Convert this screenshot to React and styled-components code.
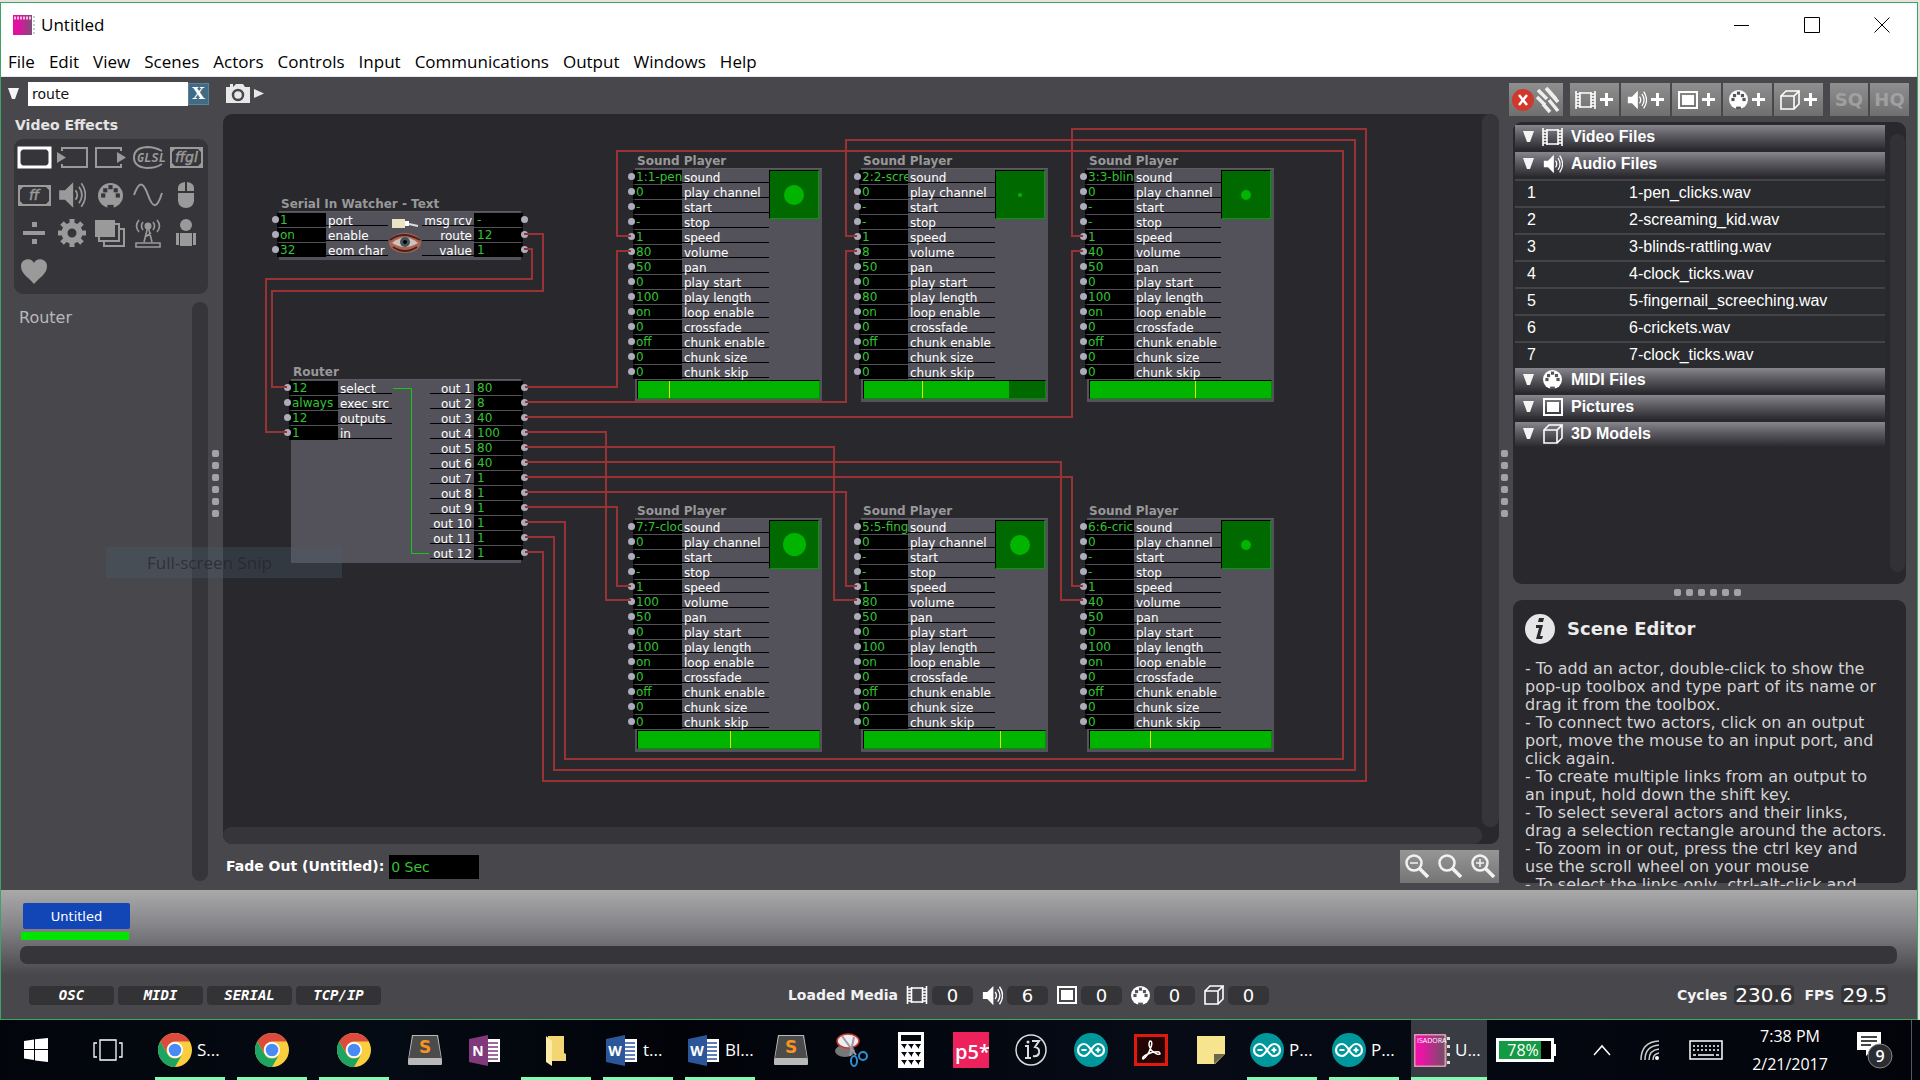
import React from "react";
import styled, { createGlobalStyle } from "styled-components";

const UI = `"DejaVu Sans", Verdana, sans-serif`;
const SYS = `"Open Sans", "Segoe UI", sans-serif`;
const ARIAL = `"Liberation Sans", Arial, sans-serif`;

const Global = createGlobalStyle`
  * { box-sizing: border-box; }
  html, body { margin: 0; padding: 0; background: #e6e3dc; }
  body { font-family: ${UI}; color: #fff; }
  button, input { font: inherit; color: inherit; border: 0; padding: 0; margin: 0; background: none; border-radius: 0; }
  h1, h2, h3, p, ul { margin: 0; padding: 0; font-weight: normal; }
  ul { list-style: none; }
  svg { display: block; flex: none; }
`;

const Screen = styled.div`
  display: flex;
  flex-direction: column;
  min-height: 100vh;
  padding-top: 2px;
`;
const Frame = styled.div`
  flex: 1;
  display: flex;
  flex-direction: column;
  margin-right: 2px;
  border: 1px solid #3ba467;
  background: #48474c;
`;

/* Title and menu */
const TitleBar = styled.header`
  display: flex;
  align-items: center;
  height: 44px;
  padding-left: 12px;
  background: #fff;
  color: #000;
`;
const Title = styled.h1`
  flex: 1;
  margin-left: 6px;
  font: 17px/24px ${SYS};
`;
const WinButton = styled.button`
  display: flex;
  align-items: center;
  justify-content: center;
  width: 70px;
  height: 40px;
`;
const MenuBar = styled.nav`
  display: flex;
  height: 30px;
  padding-left: 7px;
  gap: 14px;
  background: #fff;
  border-bottom: 1px solid #e8e8f0;
`;
const MenuItem = styled.button`
  font: 17px/30px ${SYS};
  color: #000;
`;

/* Main area */
const Body = styled.div`
  flex: 1;
  display: flex;
  min-height: 0;
`;
const Sidebar = styled.aside`
  display: flex;
  flex-direction: column;
  width: 207px;
  padding-bottom: 9px;
`;
const SearchRow = styled.div`
  display: flex;
  align-items: center;
  height: 36px;
  padding: 0 0 3px 7px;
`;
const SearchInput = styled.input`
  width: 160px;
  height: 24px;
  margin-left: 9px;
  padding: 0 4px;
  background: #fff;
  color: #111;
  font-size: 14px;
`;
const ClearButton = styled.button`
  flex: none;
  width: 21px;
  height: 22px;
  background: #406b87;
  border: 1px solid #5c8299;
  font: bold 16px/20px "DejaVu Serif", serif;
`;
const PaletteTitle = styled.h2`
  padding-left: 14px;
  height: 26px;
  font: bold 14px/24px ${UI};
  color: #e4e4e4;
`;
const Palette = styled.div`
  display: grid;
  grid-template-columns: repeat(5, 38px);
  grid-auto-rows: 38px;
  height: 155px;
  margin-left: 13px;
  padding-left: 2px;
  border-radius: 9px;
  background: #363539;
`;
const PaletteButton = styled.button`
  display: flex;
  align-items: center;
  justify-content: center;
  padding: 0 2px 2px 0;
  color: ${(p) => (p.$on ? "#fff" : "#9a9a9a")};
`;
const ActorList = styled.div`
  flex: 1;
  display: flex;
  justify-content: space-between;
  margin-top: 8px;
  padding-left: 18px;
`;
const ActorItem = styled.button`
  align-self: flex-start;
  padding-top: 6px;
  font-size: 16px;
  line-height: 20px;
  color: #b9b9bb;
`;
const ScrollTrack = styled.div`
  width: 16px;
  border-radius: 8px;
  background: #363539;
`;
const Splitter = styled.div`
  display: flex;
  flex-direction: ${(p) => (p.$row ? "row" : "column")};
  align-items: center;
  justify-content: center;
  gap: 5px;
  flex: 0 0 ${(p) => p.$size}px;
`;
const Dot = styled.i`
  width: 7px;
  height: 7px;
  border-radius: 2px;
  background: #a3a2a9;
`;

/* Scene stage */
const Stage = styled.main`
  flex: 1;
  display: flex;
  flex-direction: column;
  min-width: 0;
`;
const StageBar = styled.div`
  display: flex;
  align-items: center;
  height: 37px;
  padding: 0 0 4px 3px;
`;
const SnapshotButton = styled.button`
  display: flex;
  align-items: center;
  gap: 4px;
`;
const Canvas = styled.section`
  position: relative;
  flex: 1;
  display: grid;
  grid-template: 1fr 17px / 1fr 17px;
  border-radius: 9px;
  overflow: hidden;
  background: #29282c;
`;
const VBar = styled.div`
  grid-area: 1 / 2;
  background: #363539;
  border-radius: 8px;
`;
const HBar = styled.div`
  grid-area: 2 / 1;
  background: #363539;
  border-radius: 8px;
`;
const Wires = styled.svg`
  position: absolute;
  left: 0;
  top: 0;
  fill: none;
  pointer-events: none;
`;
const StageFoot = styled.div`
  display: flex;
  align-items: center;
  height: 46px;
  padding: 0 0 2px 3px;
`;
const FadeLabel = styled.label`
  font: bold 14px/20px ${UI};
`;
const FadeInput = styled.input`
  width: 90px;
  height: 24px;
  margin: 2px auto 0 5px;
  padding: 0 2px;
  background: #000;
  color: #35c235;
  font-size: 14px;
`;
const ZoomGroup = styled.div`
  display: flex;
  height: 33px;
  background: linear-gradient(#969696, #757575);
`;
const ZoomButton = styled.button`
  width: 33px;
  display: flex;
  align-items: center;
  justify-content: center;
`;

/* Actor nodes on the free canvas */
const NodeBox = styled.article`
  position: absolute;
  left: ${(p) => p.$x - 223}px;
  top: ${(p) => p.$y - 130}px;
  width: ${(p) => p.$w}px;
  font-size: 12px;
`;
const NodeTitle = styled.h3`
  height: 16px;
  padding-left: 2px;
  font: bold 12px/18px ${UI};
  color: #98989a;
  white-space: nowrap;
`;
const NodeBody = styled.div`
  display: flex;
  flex-wrap: wrap;
  justify-content: space-between;
  padding: 2px 0;
  background: #53525a;
  border-top: 1px solid #5c5b62;
`;
const Ports = styled.ul`
  margin-top: -1px;
  ${(p) => (p.$out ? "margin-right: -7px" : "margin-left: -7px")};
`;
const PortRow = styled.li`
  display: flex;
  height: 15px;
`;
const Port = styled.i`
  position: relative;
  flex: none;
  width: 7px;
  height: 7px;
  margin: ${(p) => (p.$out ? "3px 0 0 -2px" : "3px -2px 0 0")};
  border-radius: 50%;
  background: #adacba;
`;
const Value = styled.span`
  width: 49px;
  height: 14px;
  padding-left: 3px;
  line-height: 14px;
  overflow: hidden;
  white-space: nowrap;
  background: #000;
  color: #35c235;
`;
const Label = styled.span`
  width: ${(p) => p.$w}px;
  height: 13px;
  padding: 0 2px;
  border-bottom: 1px solid #000;
  line-height: 16px;
  white-space: nowrap;
  text-align: ${(p) => (p.$out ? "right" : "left")};
`;
const Scope = styled.div`
  display: flex;
  align-items: center;
  justify-content: center;
  width: 50px;
  height: 49px;
  margin: -1px 3px 0 0;
  border: 1px solid #00a000;
  border-top-color: #000;
  border-left-color: #000;
  background: #006a00;
`;
const Blob = styled.i`
  width: ${(p) => p.$d}px;
  height: ${(p) => p.$d}px;
  border-radius: 50%;
  background: #00b400;
`;
const Progress = styled.div`
  flex: 1 1 100%;
  height: 19px;
  margin: 0 2px 1px 2px;
  border: 1px solid #000;
  border-right-color: #009000;
  border-bottom-color: #009000;
  background: linear-gradient(90deg, #00b400 0 ${(p) => p.$len}%, #006a00 ${(p) => p.$len}%);
`;
const Needle = styled.div`
  width: 1px;
  height: 17px;
  background: #e6e600;
`;
const SnipGhost = styled.div`
  position: absolute;
  left: 106px;
  top: 547px;
  width: 236px;
  height: 31px;
  padding-left: 41px;
  background: rgba(76, 94, 110, 0.32);
  color: rgba(32, 36, 46, 0.7);
  font: 17px/32px ${SYS};
  pointer-events: none;
`;

/* Right column */
const RightCol = styled.aside`
  display: flex;
  flex-direction: column;
  width: 408px;
  padding: 6px 11px 7px 0;
`;
const MediaBar = styled.div`
  display: flex;
  height: 33px;
  gap: 2px;
  margin-right: -3px;
`;
const BarButton = styled.button`
  display: flex;
  flex: none;
  align-items: center;
  justify-content: center;
  gap: 3px;
  width: ${(p) => p.$w || 49}px;
  margin-right: ${(p) => (p.$gap ? 5 : 0)}px;
  background: linear-gradient(#8f8f90, #6f6f70);
  color: ${(p) => (p.$dim ? "#a0a0a2" : "#fff")};
  font: bold 18px/33px ${UI};
`;
const MediaPanel = styled.section`
  flex: 1;
  display: flex;
  justify-content: space-between;
  margin: 6px 0 0 4px;
  padding: 3px 1px 0 2px;
  border-radius: 9px;
  background: #29282c;
`;
const MediaList = styled.div`
  flex: 1;
  margin-right: 5px;
`;
const SectionHead = styled.button`
  display: flex;
  align-items: center;
  width: 100%;
  height: 25px;
  margin-bottom: 2px;
  padding: 0 0 2px 8px;
  gap: 8px;
  background: linear-gradient(#87868c, #5a595f 45%, #29282c);
  font: bold 16px/23px ${ARIAL};
`;
const SectionIcon = styled.span`
  display: flex;
  justify-content: center;
  width: 21px;
`;
const FileTable = styled.table`
  width: 100%;
  border-spacing: 0;
  font: 16px/23px ${ARIAL};
  td {
    height: 27px;
    padding: 0 0 2px 12px;
    border-top: 2px solid #444348;
    background: #2a2b2e;
  }
  td:first-child {
    width: 102px;
  }
`;
const MediaTrack = styled.div`
  width: 15px;
  margin: 9px 0 12px;
  border-radius: 8px;
  background: #323136;
`;
const InfoPanel = styled.section`
  height: 283px;
  margin-left: 4px;
  padding: 14px 0 0 12px;
  border-radius: 9px;
  background: #29282c;
`;
const InfoHead = styled.div`
  display: flex;
  align-items: center;
  gap: 12px;
  height: 30px;
`;
const InfoTitle = styled.h2`
  font: bold 18px/24px ${UI};
  color: #ececec;
`;
const InfoText = styled.div`
  height: 226px;
  margin-top: 16px;
  overflow: hidden;
  color: #d4d4d6;
  font-size: 16px;
  line-height: 18px;
  white-space: pre-line;
`;

/* Scene strip and status */
const Bottom = styled.footer`
  height: 129px;
  padding: 13px 20px 0 19px;
  background: linear-gradient(#a9a9a9, #86868a 35px, #48474c 85px);
`;
const SceneTab = styled.button`
  display: block;
  width: 107px;
  height: 26px;
  margin-left: 3px;
  border-radius: 2px;
  background: #1246b6;
  font-size: 13px;
`;
const SceneMark = styled.div`
  width: 108px;
  height: 8px;
  margin: 3px 0 6px 1px;
  background: #00e600;
`;
const SceneScroll = styled.div`
  height: 18px;
  border-radius: 7px;
  background: #363539;
`;
const Status = styled.div`
  display: flex;
  align-items: center;
  justify-content: space-between;
  height: 20px;
  margin-top: 21px;
  padding: 0 5px 0 9px;
`;
const StatusGroup = styled.div`
  display: flex;
  align-items: center;
  gap: ${(p) => p.$gap}px;
`;
const NetButton = styled.button`
  width: 85px;
  height: 19px;
  border-radius: 4px;
  background: #333234;
  font: italic bold 14px/19px "DejaVu Sans Mono", monospace;
`;
const StatusLabel = styled.span`
  font: bold 14px/20px ${UI};
  color: #f2f2f2;
`;
const Count = styled.output`
  width: 41px;
  height: 19px;
  margin: 0 1px 0 -4px;
  border-radius: 5px;
  background: #353437;
  font-size: 18px;
  line-height: 19px;
  text-align: center;
`;
const Meter = styled.output`
  padding: 0 1px;
  margin-right: 4px;
  border-radius: 4px;
  background: #353437;
  font-size: 20px;
  line-height: 20px;
`;

/* Taskbar */
const Taskbar = styled.nav`
  display: flex;
  height: 60px;
  background: linear-gradient(90deg, #02050b, #050b14 20%, #010308 35%, #060b16 60%, #02040a);
  font: 17px/24px ${SYS};
`;
const SysButton = styled.button`
  width: 72px;
  display: flex;
  align-items: center;
  justify-content: center;
`;
const Apps = styled.div`
  display: flex;
  gap: 12px;
  margin-left: 11px;
`;
const TaskButton = styled.button`
  display: flex;
  align-items: center;
  justify-content: ${(p) => (p.$text ? "flex-start" : "center")};
  gap: 5px;
  width: ${(p) => (p.$active ? 76 : p.$open ? 70 : 48)}px;
  padding-left: ${(p) => (p.$text ? 3 : 0)}px;
  border-bottom: 3px solid ${(p) => (p.$open ? "#80fbb0" : "transparent")};
  border-top: 3px solid transparent;
  background: ${(p) => (p.$active ? "#3a3c43" : "none")};
  white-space: nowrap;
`;
const Tray = styled.div`
  flex: 1;
  display: flex;
  align-items: center;
  justify-content: space-between;
  margin-right: 8px;
  padding: 0 18px 0 9px;
  border-right: 1px solid #55585e;
`;
const Battery = styled.div`
  display: flex;
  align-items: center;
  margin-right: 8px;
`;
const BatteryCell = styled.div`
  width: 58px;
  height: 24px;
  border: 3px solid #fff;
  background: linear-gradient(90deg, #149a42 42px, #000 42px);
  font: 16px/18px ${SYS};
  text-align: center;
  padding-right: 4px;
`;
const BatteryTip = styled.i`
  width: 2px;
  height: 12px;
  background: #fff;
`;
const Clock = styled.time`
  text-align: center;
  font: 16px/28px ${SYS};
`;

/* Icons */
const I = ({ w = 24, h = 24, vb, children, ...r }) => (
  <svg width={w} height={h} viewBox={vb || `0 0 ${w} ${h}`} fill="none" stroke="currentColor" strokeWidth="2" {...r}>
    {children}
  </svg>
);
const Tri = () => (
  <I w={11} h={12} stroke="none" fill="#f4f4f4"><path d="M0 0h11L7 11H4z" /></I>
);
const ScreenShape = () => (
  <>
    <rect x="2" y="2" width="31" height="19" />
    <path d="M3 3h3l-3 3zM32 3h-3l3 3zM3 20h3l-3-3zM32 20h-3l3-3z" fill="currentColor" stroke="none" />
  </>
);
const Speaker = ({ s = 24 }) => (
  <I w={s} h={s} vb="0 0 24 24">
    <path d="M1 8h5l7-7v22l-7-7H1z" fill="currentColor" stroke="none" />
    <path d="M15 8q3 4 0 8M18 5q5 7 0 14M20 2q7 10 0 20" strokeWidth="1.5" />
  </I>
);
const Film = ({ w = 21 }) => (
  <I w={w} h={18} vb="0 0 21 18" strokeWidth="1.6">
    <path d="M1 0v18M20 0v18M5 1v16M16 1v16M5 2h11M5 16h11M1 3h4M1 6h4M1 9h4M1 12h4M1 15h4M16 3h4M16 6h4M16 9h4M16 12h4M16 15h4" />
  </I>
);
const Pic = () => (
  <I w={20} h={18}><rect x="1" y="1" width="18" height="16" /><rect x="4" y="4" width="12" height="10" fill="currentColor" stroke="none" /></I>
);
const Midi = ({ s = 19, hole = "#55545a" }) => (
  <I w={s} h={s} vb="0 0 24 24" stroke="none">
    <circle cx="12" cy="12" r="12" fill="currentColor" />
    <g fill={hole}><rect x="10" y="2" width="4" height="4" /><rect x="5" y="5" width="4" height="4" /><rect x="15" y="5" width="4" height="4" /><rect x="3" y="10" width="4" height="4" /><rect x="17" y="10" width="4" height="4" /><rect x="9" y="21" width="6" height="3" /></g>
  </I>
);
const Cube = () => (
  <I w={20} h={20} strokeWidth="1.6"><path d="M1 6h13v13H1zM1 6l5-5h13l-5 5M19 1v13l-5 5" /></I>
);
const Plus = () => <I w={15} h={15} strokeWidth="3"><path d="M7.500 1v13M1 7.500h13" /></I>;

const paletteIcons = [
  ["Video effects", <I w={35} h={23} strokeWidth="3"><ScreenShape /></I>],
  ["Video input", <I w={35} h={23}><path d="M7 5V2h25v19H7v-3" /><path d="M2 6v11l9-5.500z" fill="currentColor" stroke="none" /></I>],
  ["Video output", <I w={35} h={23}><path d="M28 5V2H3v19h25v-3" /><path d="M24 6v11l9-5.500z" fill="currentColor" stroke="none" /></I>],
  ["GLSL", <I w={35} h={23}><path d="M31 5Q24 1 16 1 3 2 3 11.500T16 22q9 0 15-4" /><text x="6" y="16" fontSize="12" fontWeight="bold" fontStyle="italic" fill="currentColor" stroke="none" fontFamily="DejaVu Sans Mono">GLSL</text></I>],
  ["FreeFrame GL", <I w={35} h={23}><ScreenShape /><text x="6" y="16" fontSize="14" fontStyle="italic" fill="currentColor" stroke="currentColor" strokeWidth=".5" fontFamily="DejaVu Sans">ffgl</text></I>],
  ["FreeFrame", <I w={35} h={23}><ScreenShape /><text x="12" y="16" fontSize="14" fontStyle="italic" fill="currentColor" stroke="currentColor" strokeWidth=".5" fontFamily="DejaVu Sans">ff</text></I>],
  ["Audio", <Speaker s={28} />],
  ["MIDI", <Midi s={25} hole="#363539" />],
  ["Generators", <I w={30} h={24}><path d="M1 12C6-2 10-2 15 12S24 26 29 10" /></I>],
  ["Mouse", <I w={16} h={26} stroke="none" fill="currentColor"><path d="M0 9V6q0-5 7-6v9zM9 0q7 1 7 6v3H9zM0 11h16v8q-1 7-8 7t-8-7z" /></I>],
  ["Calculation", <I w={23} h={22} stroke="none" fill="currentColor"><path d="M0 9h22v4H0zM9 0h5v5H9zM9 17h5v5H9z" /></I>],
  ["Control", <I w={28} h={28}><circle cx="14" cy="14" r="7.500" strokeWidth="6" /><path d="M14 0v5M14 23v5M0 14h5M23 14h5M4 4l4 4M20 20l4 4M24 4l-4 4M8 20l-4 4" strokeWidth="5" /></I>],
  ["Scenes", <I w={30} h={27}><rect width="20" height="17" fill="currentColor" stroke="none" /><path d="M4 17v4h20V4h-4M9 21v5h20V9h-5" /></I>],
  ["Communications", <I w={26} h={30}><path d="M1 29h24v-4H1zM9 24l4-16 4 16M10 19l6-4M4 2q-5 6 0 12M8 4q-3 4 0 8M22 2q5 6 0 12M18 4q3 4 0 8" strokeWidth="1.6" /><circle cx="13" cy="8" r="2.500" fill="currentColor" /></I>],
  ["User actors", <I w={22} h={28} stroke="none" fill="currentColor"><circle cx="11" cy="6" r="6" /><path d="M5 14h12v13H5zM1 14h3v12H1zM18 14h3v12h-3z" /></I>],
  ["Favorites", <I w={28} h={25} stroke="none" fill="currentColor"><path d="M14 25C8 18 1 15 1 7 1-1 12-2 14 4c2-6 13-5 13 3 0 8-7 11-13 18z" /></I>],
];

const menus = ["File", "Edit", "View", "Scenes", "Actors", "Controls", "Input", "Communications", "Output", "Windows", "Help"];

const inputs = ["sound", "play channel", "start", "stop", "speed", "volume", "pan", "play start", "play length", "loop enable", "crossfade", "chunk enable", "chunk size", "chunk skip"];
const players = [
  { x: 635, y: 168, s: "1:1-pen", vol: 80, len: 100, d: 20, pos: 17 },
  { x: 861, y: 168, s: "2:2-scre", vol: 8, len: 80, d: 4, pos: 32 },
  { x: 1087, y: 168, s: "3:3-blin", vol: 40, len: 100, d: 10, pos: 58 },
  { x: 635, y: 518, s: "7:7-cloc", vol: 100, len: 100, d: 23, pos: 51 },
  { x: 861, y: 518, s: "5:5-fing", vol: 80, len: 100, d: 20, pos: 75 },
  { x: 1087, y: 518, s: "6:6-cric", vol: 40, len: 100, d: 10, pos: 33 },
];
const routerOuts = [80, 8, 40, 100, 80, 40, 1, 1, 1, 1, 1, 1];

const wires = [
  "524,234 543,234 543,291 272,291 272,387 287,387",
  "524,249 532,249 532,279 266,279 266,432 287,432",
  "525,387 617,387 617,251 631,251",
  "525,402 846,402 846,251 857,251",
  "525,417 1072,417 1072,251 1083,251",
  "525,432 606,432 606,600 631,600",
  "525,447 834,447 834,600 857,600",
  "525,462 1061,462 1061,600 1083,600",
  "525,477 1072,477 1072,586 1083,586",
  "525,492 846,492 846,586 857,586",
  "525,507 617,507 617,586 631,586",
  "525,522 565,522 565,759 1343,759 1343,151 617,151 617,236 631,236",
  "525,537 554,537 554,770 1355,770 1355,140 846,140 846,236 857,236",
  "525,552 543,552 543,781 1366,781 1366,129 1072,129 1072,236 1083,236",
];

const Ins = ({ rows, w }) => (
  <Ports>
    {rows.map(([l, v]) => (
      <PortRow key={l}><Port /><Value>{v}</Value><Label $w={w}>{l}</Label></PortRow>
    ))}
  </Ports>
);
const Outs = ({ rows, w }) => (
  <Ports $out>
    {rows.map(([l, v]) => (
      <PortRow key={l}><Label $out $w={w}>{l}</Label><Value>{v}</Value><Port $out /></PortRow>
    ))}
  </Ports>
);

const Player = ({ p }) => {
  const vals = [p.s, 0, "-", "-", 1, p.vol, 50, 0, p.len, "on", 0, "off", 0, 0];
  return (
    <NodeBox $x={p.x} $y={p.y} $w={187}>
      <NodeTitle>Sound Player</NodeTitle>
      <NodeBody>
        <Ins rows={inputs.map((l, i) => [l, vals[i]])} w={87} />
        <Scope><Blob $d={p.d} /></Scope>
        <Progress $len={p.len}><Needle style={{ marginLeft: `${p.pos}%` }} /></Progress>
      </NodeBody>
    </NodeBox>
  );
};

const files = ["1-pen_clicks.wav", "2-screaming_kid.wav", "3-blinds-rattling.wav", "4-clock_ticks.wav", "5-fingernail_screeching.wav", "6-crickets.wav", "7-clock_ticks.wav"];
const Section = ({ icon, children }) => (
  <SectionHead><Tri /><SectionIcon>{icon}</SectionIcon>{children}</SectionHead>
);
const Dots = () => [0, 1, 2, 3, 4, 5].map((n) => <Dot key={n} />);

const help = `- To add an actor, double-click to show the
pop-up toolbox and type part of its name or
drag it from the toolbox.
- To connect two actors, click on an output
port, move the mouse to an input port, and
click again.
- To create multiple links from an output to
an input, hold down the shift key.
- To select several actors and their links,
drag a selection rectangle around the actors.
- To zoom in or out, press the ctrl key and
use the scroll wheel on your mouse
- To select the links only, ctrl-alt-click and`;

/* Taskbar icons */
const Chrome = () => (
  <I w={34} h={34} stroke="none">
    <circle cx="17" cy="17" r="17" fill="#fbce3e" />
    <path d="M2.300 8.500A17 17 0 0 1 31.700 8.500H17A8.500 8.500 0 0 0 9.600 21z" fill="#dc4b3e" />
    <path d="M2.300 8.500A17 17 0 0 0 17 34l7.400-12.800A8.500 8.500 0 0 1 9.600 21.200z" fill="#1da362" />
    <circle cx="17" cy="17" r="8" fill="#fff" /><circle cx="17" cy="17" r="6.300" fill="#4a8af4" />
  </I>
);
const Sublime = () => (
  <I w={34} h={30} stroke="none">
    <path d="M4 0h26l4 25v4q0 1-1 1H1q-1 0-1-1v-4z" fill="#b9b9b9" /><path d="M5 1h24l4 22H1z" fill="#4b4b4b" />
    <text x="17" y="18" textAnchor="middle" fontSize="17" fontWeight="bold" fontFamily="DejaVu Sans" fill="#f79321">S</text>
  </I>
);
const Office = ({ c, l }) => (
  <I w={32} h={31} stroke="none">
    <path d="M17 4h14v23H17z" fill="#fff" /><path d="M19 8h10M19 12h10M19 16h10M19 20h10M19 24h10" stroke={c} strokeWidth="1.500" />
    <path d="M0 4l19-4v31L0 27z" fill={c} />
    <text x="9" y="21" textAnchor="middle" fontSize="14" fontWeight="bold" fontFamily="Open Sans" fill="#fff">{l}</text>
  </I>
);
const Folder = () => <I w={22} h={31} stroke="none"><path d="M3 1h16v17l2 1v7H3z" fill="#f3d573" /><path d="M1 1l6 5v25l-6-4z" fill="#fdeba6" /></I>;
const Snip = () => (
  <I w={34} h={34}>
    <ellipse cx="11" cy="18" rx="10" ry="6" fill="#777" stroke="none" />
    <ellipse cx="14" cy="8" rx="11" ry="7" fill="#eee" stroke="#c33" strokeWidth="1.500" />
    <path d="M8 3l14 19M20 4l-4 19" stroke="#99a" /><circle cx="29" cy="23" r="4" stroke="#2f8fd0" /><ellipse cx="20" cy="28" rx="3" ry="5" stroke="#2f8fd0" />
  </I>
);
const Calc = () => (
  <I w={26} h={36} stroke="none"><path d="M0 0h26v36H0z" fill="#fff" /><path d="M3 3h20v6H3z" fill="#05080f" />
    {[12, 20, 28].map((y) => [3, 10, 17].map((x) => <path key={x + "-" + y} d={`M${x} ${y}h6l-2 3v2z`} fill="#05080f" />))}
  </I>
);
const P5 = () => <I w={36} h={36} stroke="none"><path d="M0 0h36v36H0z" fill="#ed225d" /><text x="2" y="27" fontSize="20" fontWeight="600" fontFamily="Open Sans" fill="#fff">p5*</text></I>;
const I3 = () => <I w={32} h={34} stroke="#ddd"><circle cx="16" cy="17" r="15" strokeWidth="1.500" /><path d="M10 13h3v11M10 25h6M17 8h7l-4 6q5 1 4 6-1 4-6 3" /><circle cx="13" cy="9" r="1.500" fill="#ddd" stroke="none" /></I>;
const Arduino = () => (
  <I w={34} h={34}><circle cx="17" cy="17" r="17" fill="#00979c" stroke="none" />
    <path d="M17 17c-3-5-5-6-7-6a6 6 0 0 0 0 12c2 0 4-1 7-6s5-6 7-6a6 6 0 0 1 0 12c-2 0-4-1-7-6zM7.500 17h5M21.500 17h5M24 14.500v5" stroke="#fff" strokeWidth="2.200" />
  </I>
);
const Acrobat = () => <I w={34} h={32}><rect x="1.500" y="1.500" width="31" height="29" fill="#240303" stroke="#e0180e" strokeWidth="3" /><path d="M16 7q3 0 1 6-3 9-8 12-2-2 5-5 6-3 11-2 3 3-2 2-7-3-8-9 0-3 1-4z" stroke="#fff" strokeWidth="1.500" /></I>;
const Sticky = () => <I w={28} h={28} stroke="none"><path d="M0 0h28v18L18 28H0z" fill="#f6e58e" /><path d="M28 18H17v10z" fill="#6c6748" /></I>;
const IsadoraBig = () => (
  <I w={36} h={33} stroke="none">
    <defs><linearGradient id="isa"><stop offset=".2" stopColor="#ef12a8" /><stop offset="1" stopColor="#6d5165" /></linearGradient></defs>
    <rect x=".5" y=".5" width="31" height="32" rx="2" fill="url(#isa)" stroke="#d9a" />
    <text x="3" y="9" fontSize="7" fontFamily="Open Sans" fill="#fff">ISADORA</text>
    <path d="M34.500 3v30" stroke="#ddd" strokeWidth="3" strokeDasharray="3 5" />
  </I>
);

const apps = [
  ["Chrome, first window", <Chrome />, 1, "S..."], ["Chrome, second window", <Chrome />, 1], ["Chrome, third window", <Chrome />, 1],
  ["Sublime Text", <Sublime />], ["OneNote", <Office c="#80397b" l="N" />], ["Explorer", <Folder />, 1],
  ["Word, first document", <Office c="#2b579a" l="W" />, 1, "t..."], ["Word, second document", <Office c="#2b579a" l="W" />, 1, "Bl..."],
  ["Sublime Text, pinned", <Sublime />], ["Snipping Tool", <Snip />], ["Calculator", <Calc />], ["p5", <P5 />], ["Processing", <I3 />],
  ["Arduino", <Arduino />], ["Acrobat", <Acrobat />], ["Sticky Notes", <Sticky />],
  ["Arduino, first sketch", <Arduino />, 1, "P..."], ["Arduino, second sketch", <Arduino />, 1, "P..."], ["Isadora", <IsadoraBig />, 1, "U...", 1],
];

const mediaCounts = [["Videos", <Film w={22} />, 0], ["Sounds", <Speaker s={21} />, 6], ["Pictures loaded", <Pic />, 0], ["MIDI loaded", <Midi />, 0], ["Models loaded", <Cube />, 0]];

export default function App() {
  return (
    <Screen>
      <Global />
      <Frame>
        <TitleBar>
          <I w={22} h={20} stroke="none">
            <defs><linearGradient id="isaS"><stop offset=".3" stopColor="#e010a0" /><stop offset="1" stopColor="#7d5078" /></linearGradient></defs>
            <path d="M0 0h19v20H0z" fill="url(#isaS)" /><path d="M1 3h17" stroke="#fbd" strokeWidth="3" strokeDasharray="2 1" /><path d="M21 1v18" stroke="#ccc" strokeWidth="2" strokeDasharray="2 2" />
          </I>
          <Title>Untitled</Title>
          <WinButton aria-label="Minimize"><I w={16} h={16} strokeWidth="1"><path d="M0 8.500h15" /></I></WinButton>
          <WinButton aria-label="Maximize"><I w={16} h={16} strokeWidth="1"><path d="M.5.5h15v15H.5z" /></I></WinButton>
          <WinButton aria-label="Close"><I w={16} h={16} strokeWidth="1"><path d="M.5.5l15 15M15.500.5l-15 15" /></I></WinButton>
        </TitleBar>
        <MenuBar>{menus.map((m) => <MenuItem key={m}>{m}</MenuItem>)}</MenuBar>

        <Body>
          <Sidebar>
            <SearchRow>
              <Tri />
              <SearchInput aria-label="Find actor" defaultValue="route" />
              <ClearButton aria-label="Clear">X</ClearButton>
            </SearchRow>
            <PaletteTitle>Video Effects</PaletteTitle>
            <Palette>
              {paletteIcons.map(([name, icon], i) => <PaletteButton key={name} aria-label={name} $on={i === 0}>{icon}</PaletteButton>)}
            </Palette>
            <ActorList><ActorItem>Router</ActorItem><ScrollTrack /></ActorList>
          </Sidebar>
          <Splitter $size={15}><Dots /></Splitter>

          <Stage>
            <StageBar>
              <SnapshotButton aria-label="Snapshot">
                <I w={24} h={20} stroke="none"><path d="M0 3h4V0h3v3l3-3h7l2 3h5v16H0z" fill="#e8e8e8" /><circle cx="12" cy="11" r="5" stroke="#48474c" strokeWidth="2.500" /></I>
                <I w={10} h={9} stroke="none" fill="#e8e8e8"><path d="M0 0l10 4.500L0 9z" /></I>
              </SnapshotButton>
            </StageBar>
            <Canvas>
              <VBar /><HBar />
              <NodeBox $x={279} $y={211} $w={242}>
                <NodeTitle>Serial In Watcher - Text</NodeTitle>
                <NodeBody>
                  <Ins rows={[["port", 1], ["enable", "on"], ["eom char", 32]]} w={62} />
                  <I w={34} h={42} stroke="none">
                    <rect x="4" y="5" width="13" height="9" fill="#e9e4c4" /><path d="M17 7h4v5h-4z" fill="#fff" /><path d="M21 10l9 2" stroke="#ddd" strokeWidth="2" />
                    <ellipse cx="17" cy="29" rx="16" ry="10" fill="#a96452" /><path d="M4 29q13-11 26 0-13 8-26 0z" fill="#d0c2ba" />
                    <path d="M2 26q13-10 30 0M5 33q12 8 24 0" stroke="#4a221b" strokeWidth="2" /><circle cx="17" cy="28" r="5" fill="#43525a" /><circle cx="17" cy="28" r="2" fill="#000" />
                  </I>
                  <Outs rows={[["msg rcv", "-"], ["route", 12], ["value", 1]]} w={52} />
                </NodeBody>
              </NodeBox>
              <NodeBox $x={291} $y={379} $w={230}>
                <NodeTitle>Router</NodeTitle>
                <NodeBody>
                  <Ins rows={[["select", 12], ["exec src", "always"], ["outputs", 12], ["in", 1]]} w={54} />
                  <Outs rows={routerOuts.map((v, i) => [`out ${i + 1}`, v])} w={44} />
                </NodeBody>
              </NodeBox>
              {players.map((p) => <Player key={p.s} p={p} />)}
              <Wires width="1276" height="729" viewBox="223 114 1276 729">
                <polyline points="393,388.500 411.500,388.500 411.500,553.500 429,553.500" stroke="#14c814" strokeWidth="1" />
                {wires.map((w) => <polyline key={w} points={w} stroke="#993235" strokeWidth="2" />)}
              </Wires>
            </Canvas>
            <StageFoot>
              <FadeLabel htmlFor="fade">Fade Out (Untitled):</FadeLabel>
              <FadeInput id="fade" defaultValue="0 Sec" />
              <ZoomGroup>
                {["Zoom out", "Zoom reset", "Zoom in"].map((z, i) => (
                  <ZoomButton key={z} aria-label={z}>
                    <I w={24} h={24} stroke="#f2f2f2"><circle cx="9" cy="9" r="7.500" strokeWidth="2.500" /><path d="M14 14l9 9" strokeWidth="3.500" />{i !== 1 && <path d={i === 2 ? "M5 9h8M9 5v8" : "M5 9h8"} strokeWidth="1.500" />}</I>
                  </ZoomButton>
                ))}
              </ZoomGroup>
            </StageFoot>
          </Stage>

          <Splitter $size={10}><Dots /></Splitter>
          <RightCol>
            <MediaBar>
              <BarButton $w={54} $gap aria-label="Remove links">
                <I w={50} h={28} stroke="none"><circle cx="12" cy="14" r="11" fill="#d0382c" /><path d="M8 9l8 10M16 9L8 19" stroke="#fff" strokeWidth="2.500" /><path d="M27 4l9 9M35 2l12 14M26 11l8 8M38 14l9 11M32 18l7 8M37 4l8 9" stroke="#eee" strokeWidth="3.500" /></I>
              </BarButton>
              <BarButton aria-label="Add video"><Film /><Plus /></BarButton>
              <BarButton aria-label="Add audio"><Speaker s={20} /><Plus /></BarButton>
              <BarButton aria-label="Add picture"><Pic /><Plus /></BarButton>
              <BarButton aria-label="Add MIDI"><Midi /><Plus /></BarButton>
              <BarButton $gap aria-label="Add 3D model"><Cube /><Plus /></BarButton>
              <BarButton $w={38} $dim>SQ</BarButton>
              <BarButton $w={39} $dim>HQ</BarButton>
            </MediaBar>
            <MediaPanel>
              <MediaList>
                <Section icon={<Film />}>Video Files</Section>
                <Section icon={<Speaker s={20} />}>Audio Files</Section>
                <FileTable><tbody>{files.map((f, i) => <tr key={f}><td>{i + 1}</td><td>{f}</td></tr>)}</tbody></FileTable>
                <Section icon={<Midi />}>MIDI Files</Section>
                <Section icon={<Pic />}>Pictures</Section>
                <Section icon={<Cube />}>3D Models</Section>
              </MediaList>
              <MediaTrack />
            </MediaPanel>
            <Splitter $row $size={16}><Dots /></Splitter>
            <InfoPanel>
              <InfoHead>
                <I w={30} h={30} stroke="none"><circle cx="15" cy="15" r="15" fill="#e6e6e6" /><path d="M14 4h5l-1 4h-5zM11 11h7l-3 11h3l-1 3h-6l3-11h-3z" fill="#29282c" /></I>
                <InfoTitle>Scene Editor</InfoTitle>
              </InfoHead>
              <InfoText>{help}</InfoText>
            </InfoPanel>
          </RightCol>
        </Body>

        <Bottom>
          <SceneTab>Untitled</SceneTab>
          <SceneMark />
          <SceneScroll />
          <Status>
            <StatusGroup $gap={4}>{["OSC", "MIDI", "SERIAL", "TCP/IP"].map((n) => <NetButton key={n}>{n}</NetButton>)}</StatusGroup>
            <StatusGroup $gap={8}>
              <StatusLabel>Loaded Media</StatusLabel>
              {mediaCounts.map(([n, icon, c]) => <React.Fragment key={n}>{icon}<Count aria-label={n}>{c}</Count></React.Fragment>)}
            </StatusGroup>
            <StatusGroup $gap={7}>
              <StatusLabel>Cycles</StatusLabel><Meter>230.6</Meter><StatusLabel>FPS</StatusLabel><Meter>29.5</Meter>
            </StatusGroup>
          </Status>
        </Bottom>
      </Frame>

      <Taskbar>
        <SysButton aria-label="Start"><I w={24} h={24} stroke="none" fill="#fff"><path d="M0 3l10-1.500V11H0zM11 1.300L24 0v11H11zM0 12h10v10L0 20.500zM11 12h13v12l-13-1.500z" /></I></SysButton>
        <SysButton aria-label="Task view"><I w={30} h={22} stroke="#fff" strokeWidth="1.300"><path d="M7 1h16v20H7zM4 4H1v14h3M26 4h3v14h-3" /></I></SysButton>
        <Apps>
          {apps.map(([n, icon, open, text, active]) => (
            <TaskButton key={n} aria-label={n} $open={!!open} $text={!!text} $active={!!active}>{icon}{text}</TaskButton>
          ))}
        </Apps>
        <Tray>
          <Battery><BatteryCell>78%</BatteryCell><BatteryTip /></Battery>
          <I w={18} h={12} stroke="#fff" strokeWidth="1.500"><path d="M1 11l8-9 8 9" /></I>
          <I w={20} h={20} stroke="#ccc" strokeWidth="1.500"><path d="M1 20Q1 2 19 1M5 20Q5 6 19 5M9 20Q9 10 19 9M13 20q0-6 6-7" /><circle cx="17" cy="18" r="2" fill="#fff" stroke="none" /></I>
          <I w={34} h={20} stroke="#fff" strokeWidth="1.500"><path d="M1 1h32v18H1z" /><path d="M4 6h26M4 10h26" strokeDasharray="2 2" /><path d="M4 15h3M9 15h16M27 15h3" /></I>
          <Clock>7:38 PM<br />2/21/2017</Clock>
          <I w={36} h={38} stroke="none"><path d="M0 1h24v18h-9l-6 6v-6H0z" fill="#fff" /><path d="M4 6h16M4 10h16M4 14h10" stroke="#05080f" strokeWidth="1.500" /><circle cx="23" cy="25" r="12" fill="#2b2d32" stroke="#888" strokeWidth="1" /><text x="23" y="31" textAnchor="middle" fontSize="16" fontWeight="600" fontFamily="Open Sans" fill="#fff">9</text></I>
        </Tray>
      </Taskbar>
      <SnipGhost>Full-screen Snip</SnipGhost>
    </Screen>
  );
}
